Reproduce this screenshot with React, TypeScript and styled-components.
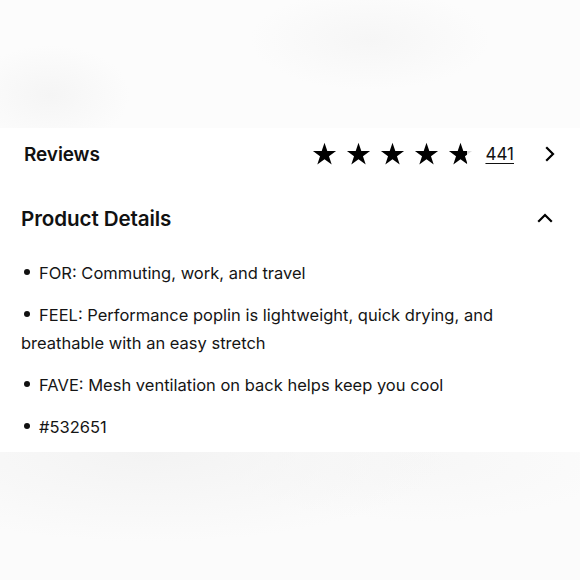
import React from "react";
import styled, { createGlobalStyle } from "styled-components";

const Global = createGlobalStyle`
  html, body { margin: 0; padding: 0; background: #fcfcfc; }
  body { font-family: "Inter", "Noto Sans", sans-serif; color: #111; }
`;

const Page = styled.div`
  width: 580px;
  height: 580px;
  display: flex;
  flex-direction: column;
  overflow: hidden;
`;

const TopShade = styled.div`
  height: 128px;
  flex-shrink: 0;
  background:
    radial-gradient(ellipse 80px 50px at 50px 95px, #f5f5f5, rgba(245,245,245,0)),
    radial-gradient(ellipse 120px 50px at 370px 40px, #f6f6f6, rgba(246,246,246,0)),
    #fcfcfc;
`;

const BottomShade = styled.div`
  flex: 1;
  background:
    radial-gradient(ellipse 300px 90px at 150px 0px, #f3f3f3, rgba(243,243,243,0)),
    radial-gradient(ellipse 200px 60px at 420px 10px, #f7f7f7, rgba(247,247,247,0)),
    #fbfbfb;
`;

const Panel = styled.div`
  background: #fff;
  height: 324px;
  flex-shrink: 0;
  display: flex;
  flex-direction: column;
`;

const Row = styled.div<{ $h: number; $pl: number; $pr: number }>`
  height: ${(p) => p.$h}px;
  flex-shrink: 0;
  display: flex;
  align-items: center;
  padding: 0 ${(p) => p.$pr}px 0 ${(p) => p.$pl}px;
`;

const Title = styled.div<{ $size: number }>`
  font-size: ${(p) => p.$size}px;
  font-weight: 600;
  letter-spacing: -0.1px;
  flex: 1;
`;

const Stars = styled.div`
  display: flex;
  align-items: center;
  gap: 9px;
`;

const Count = styled.a`
  font-size: 17px;
  color: #111;
  text-decoration: underline;
  text-underline-offset: 3px;
  margin-left: 12px;
  margin-right: 28px;
`;

const List = styled.ul`
  list-style: none;
  margin: 0;
  padding: 3px 22px 0 21px;
  display: flex;
  flex-direction: column;
  gap: 14px;
`;

const Item = styled.li`
  font-size: 16.5px;
  line-height: 28px;
  color: #151515;
`;

const Dot = styled.span`
  display: inline-block;
  width: 6px;
  height: 6px;
  border-radius: 50%;
  background: #111;
  margin: 0 9px 0 3px;
  vertical-align: middle;
  position: relative;
  top: -3px;
`;

const Star = ({ half }: { half?: boolean }) => (
  <svg width="25" height="24" viewBox="0 0 24 23">
    <defs>
      <linearGradient id="halfg">
        <stop offset="80%" stopColor="#000" />
        <stop offset="80%" stopColor="#ddd" />
      </linearGradient>
    </defs>
    <path
      d="M12 0.8l2.7 7.9h8.4l-6.8 4.9 2.6 8-6.9-5-6.9 5 2.6-8-6.8-4.9h8.4z"
      fill={half ? "url(#halfg)" : "#000"}
    />
  </svg>
);

const Chevron = ({ dir }: { dir: "right" | "up" }) => (
  <svg width="16" height="16" viewBox="0 0 16 16" fill="none" stroke="#000" strokeWidth="2.2" strokeLinecap="square">
    {dir === "right" ? <path d="M5 2l6 6-6 6" /> : <path d="M2 11l6-6 6 6" />}
  </svg>
);

export default function App() {
  const items = [
    "FOR: Commuting, work, and travel",
    "FEEL: Performance poplin is lightweight, quick drying, and breathable with an easy stretch",
    "FAVE: Mesh ventilation on back helps keep you cool",
    "#532651",
  ];
  return (
    <Page>
      <Global />
      <TopShade />
      <Panel>
        <Row $h={52} $pl={24} $pr={22}>
          <Title $size={19}>Reviews</Title>
          <Stars>
            <Star />
            <Star />
            <Star />
            <Star />
            <Star half />
          </Stars>
          <Count>441</Count>
          <Chevron dir="right" />
        </Row>
        <Row $h={76} $pl={21} $pr={27}>
          <Title $size={20.6}>Product Details</Title>
          <Chevron dir="up" />
        </Row>
        <List>
          {items.map((t) => (
            <Item key={t}>
              <Dot />
              {t}
            </Item>
          ))}
        </List>
      </Panel>
      <BottomShade />
    </Page>
  );
}
